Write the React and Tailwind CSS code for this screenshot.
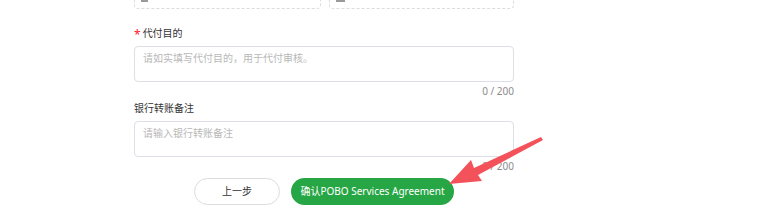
import React from 'react';

const font = { fontFamily: '"Noto Sans", "Noto Sans CJK SC", sans-serif' };

const App = () => {
  return (
    <div className="relative w-[757px] h-[219px] overflow-hidden bg-white" style={font}>
      <div className="ml-[134px] w-[380px]">
        {/* upload boxes cut off at top */}
        <div className="flex gap-[8px] mt-[-21px]">
          <div className="w-[187px] h-[30px] border border-dashed border-[#dcdcdc] rounded-[4px] pl-[6px] pt-[20px]">
            <div className="w-[7px] h-[2px] bg-[#9a9a9a]" />
          </div>
          <div className="w-[186px] h-[30px] border border-dashed border-[#dcdcdc] rounded-[4px] pl-[6px] pt-[20px]">
            <div className="w-[9px] h-[2px] bg-[#9a9a9a]" />
          </div>
        </div>

        <div className="mt-[14px] h-[20px] flex items-center text-[10px] text-[#333]">
          <span className="text-[#f5222d] text-[12px] mr-[2px] leading-none pt-[3px]">*</span>
          <span>代付目的</span>
        </div>
        <div className="mt-[3px] h-[36px] border border-[#dcdfe6] rounded-[4px] px-[8px] pt-[4px] text-[10px] text-[#b8b8b8]">
          请如实填写代付目的，用于代付审核。
        </div>
        <div className="mt-[2px] h-[14px] flex items-center justify-end text-[10px] text-[#8c8c8c]">0 / 200</div>

        <div className="h-[20px] flex items-center text-[10px] text-[#333]">银行转账备注</div>
        <div className="mt-[3px] h-[36px] border border-[#dcdfe6] rounded-[4px] px-[8px] pt-[4px] text-[10px] text-[#b8b8b8]">
          请输入银行转账备注
        </div>
        <div className="mt-[2px] h-[14px] flex items-center justify-end text-[10px] text-[#8c8c8c]">0 / 200</div>

        <div className="mt-[5px] flex justify-center gap-[11px]">
          <button className="w-[86px] h-[27px] rounded-full border border-[#dcdcdc] bg-white text-[10px] text-[#333]">
            上一步
          </button>
          <button className="w-[163px] h-[27px] rounded-full bg-[#26a644] text-white text-[10px]">
            确认POBO Services Agreement
          </button>
        </div>
      </div>

      <svg className="absolute inset-0" width="757" height="219" viewBox="0 0 757 219">
        <polygon
          points="449,184 471,160 474,168 541,137 543,140 478,175 482,181"
          fill="#f4525a"
        />
      </svg>
    </div>
  );
};

export default App;
